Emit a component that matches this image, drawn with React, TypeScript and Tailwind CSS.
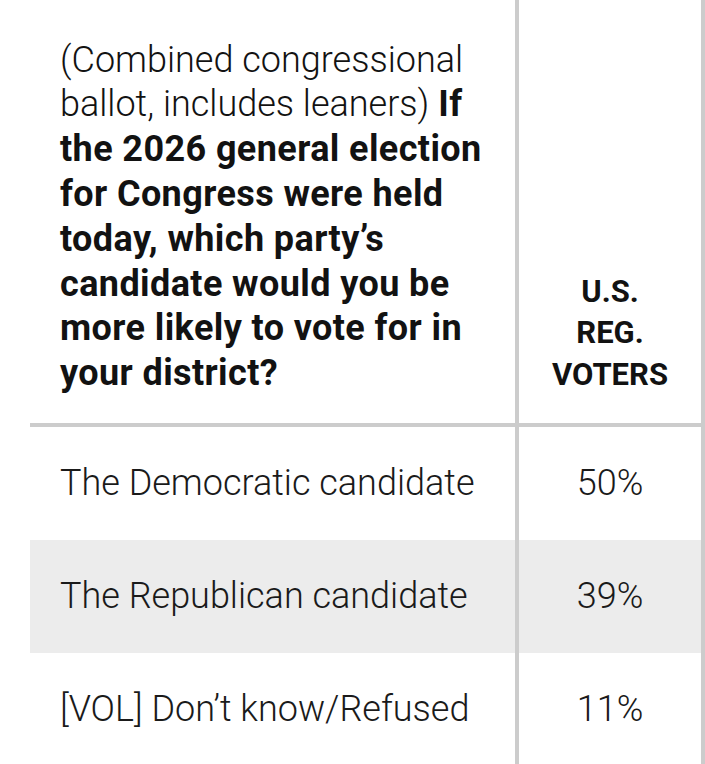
export default function App() {
  const rows = [
    { label: "The Democratic candidate", value: "50%", shaded: false },
    { label: "The Republican candidate", value: "39%", shaded: true },
    { label: "[VOL] Don\u2019t know/Refused", value: "11%", shaded: false },
  ];
  return (
    <div className="w-[705px] h-[764px] overflow-hidden bg-white font-['Roboto',sans-serif] text-[#121212]">
      <div className="ml-[30px]">
        <div className="flex border-b-4 border-[#cccccc]">
          <div className="w-[489px] h-[423px] border-r-4 border-[#cccccc] flex flex-col justify-end pl-[30px] pb-[27px]">
            <p className="text-[36px] leading-[44.8px] whitespace-nowrap">
              <span className="font-light">(Combined congressional</span>
              <br />
              <span className="font-light">ballot, includes leaners)</span>{" "}
              <span className="font-bold tracking-[0.4px]">If</span>
              <br />
              <span className="font-bold tracking-[0.4px]">the 2026 general election</span>
              <br />
              <span className="font-bold tracking-[0.4px]">for Congress were held</span>
              <br />
              <span className="font-bold tracking-[0.4px]">today, which party{"\u2019"}s</span>
              <br />
              <span className="font-bold tracking-[0.4px]">candidate would you be</span>
              <br />
              <span className="font-bold tracking-[0.4px]">more likely to vote for in</span>
              <br />
              <span className="font-bold tracking-[0.4px]">your district?</span>
            </p>
          </div>
          <div className="w-[186px] h-[423px] border-r-4 border-[#cccccc] flex flex-col justify-end items-center pb-[28px]">
            <p className="text-[31px] leading-[41.5px] font-bold text-center">
              U.S.
              <br />
              REG.
              <br />
              VOTERS
            </p>
          </div>
        </div>
        {rows.map((r) => (
          <div
            key={r.label}
            className={`flex h-[113px] ${r.shaded ? "bg-[#ececec]" : "bg-white"}`}
          >
            <div className="w-[489px] border-r-4 border-[#cccccc] flex items-center pl-[30px] pb-[2px]">
              <span className="text-[36px] font-light text-[#1a1a1a] whitespace-nowrap">{r.label}</span>
            </div>
            <div className="w-[186px] border-r-4 border-[#cccccc] flex items-center justify-center pb-[2px]">
              <span className="text-[36px] font-light text-[#1a1a1a]">{r.value}</span>
            </div>
          </div>
        ))}
      </div>
    </div>
  );
}
